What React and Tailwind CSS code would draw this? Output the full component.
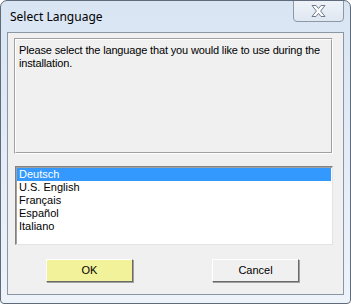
import React, { useState } from 'react';

const languages = ['Deutsch', 'U.S. English', 'Français', 'Español', 'Italiano'];

function CloseGlyph() {
    // hollow "X" like the Windows 7 basic theme close button
    return (
        <svg width="17" height="14" viewBox="0 0 17 14">
            <path
                d="M2 1.5 H6 L8.5 4.6 L11 1.5 H15 L10.6 7 L15 12.5 H11 L8.5 9.4 L6 12.5 H2 L6.4 7 Z"
                fill="#ffffff"
                stroke="#6f7b8b"
                strokeWidth="1"
                strokeLinejoin="round"
            />
        </svg>
    );
}

function DialogButton({ label, isDefault }) {
    return (
        <button
            className={`w-[87px] h-[23px] text-[11px] text-black border border-t-white border-l-white border-r-[#696969] border-b-[#696969] shadow-[1px_1px_0_#a0a0a0] ${
                isDefault ? 'bg-[#f2f29a]' : 'bg-[#f0f0f0]'
            }`}
        >
            {label}
        </button>
    );
}

export default function App() {
    const [selected, setSelected] = useState(0);

    return (
        <div
            className="w-[351px] h-[304px] flex flex-col rounded-t-[7px] rounded-b-[4px] border border-[#5f6b7a] bg-gradient-to-b from-[#d9e5f3] via-[#e3ecf7] to-[#eef3fa] overflow-hidden"
            style={{ fontFamily: '"Liberation Sans", Arial, sans-serif' }}
        >
            {/* title bar */}
            <div className="h-[31px] flex items-start justify-between pl-[9px]">
                <span
                    className="mt-[7px] text-[12px] text-black"
                    style={{ fontFamily: '"Noto Sans", "Open Sans", sans-serif' }}
                >
                    Select Language
                </span>
                <div className="mr-[6px] w-[51px] h-[22px] -mt-px flex items-center justify-center rounded-b-[4px] border border-[#8d98a6] bg-gradient-to-b from-[#eef3f9] to-[#dfe7f1]">
                    <CloseGlyph />
                </div>
            </div>

            {/* client area */}
            <div className="mx-[6px] h-[263px] border border-[#8a96a4] bg-[#f0f0f0] flex flex-col">
                <div className="ml-[6px] mt-[5px] w-[319px] h-[116px] border border-t-[#a0a0a0] border-l-[#a0a0a0] border-r-white border-b-white">
                    <div className="h-full border border-t-white border-l-white border-r-[#a0a0a0] border-b-[#a0a0a0] px-[3px] pt-[4px]">
                        <p className="text-[11px] leading-[13px] tracking-[-0.15px] text-black whitespace-nowrap">
                            Please select the language that you would like to use during the
                            <br />
                            installation.
                        </p>
                    </div>
                </div>

                <div className="ml-[7px] mt-[12px] w-[318px] h-[79px] bg-white border border-t-[#828282] border-l-[#828282] border-r-[#e3e3e3] border-b-[#e3e3e3] shadow-[inset_1px_1px_0_#a0a0a0]">
                    <ul className="pt-[1px] pl-[1px] pr-px">
                        {languages.map((lang, i) => (
                            <li
                                key={lang}
                                onClick={() => setSelected(i)}
                                className={`h-[13px] pl-[2px] text-[11px] leading-[13px] ${
                                    i === selected ? 'bg-[#3399ff] text-white' : 'text-black'
                                }`}
                            >
                                {lang}
                            </li>
                        ))}
                    </ul>
                </div>

                <div className="mt-[14px] flex pl-[38px] gap-[79px]">
                    <DialogButton label="OK" isDefault />
                    <DialogButton label="Cancel" />
                </div>
            </div>
        </div>
    );
}
